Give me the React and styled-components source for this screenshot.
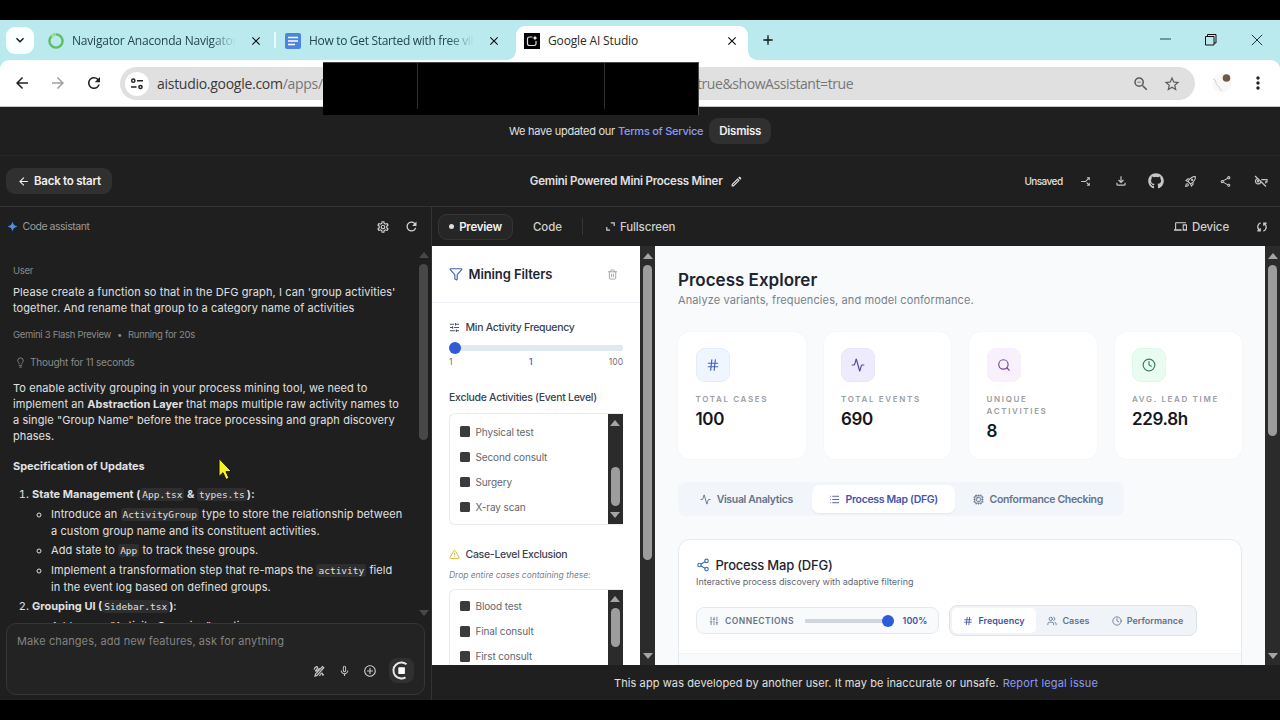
import React from 'react';
import styled, { createGlobalStyle } from 'styled-components';
import {
  Activity,
  Clock,
  Cpu,
  Filter,
  Hash,
  Lightbulb,
  List,
  Search,
  Share2,
  SlidersHorizontal,
  SlidersVertical,
  Trash2,
  TriangleAlert,
  Users,
} from 'lucide-react';
import {
  MdAddCircleOutline,
  MdArrowBack,
  MdArrowForward,
  MdCallSplit,
  MdClose,
  MdAdd,
  MdKeyboardArrowDown,
  MdMoreVert,
  MdOutlineDevices,
  MdOutlineEdit,
  MdOutlineFileDownload,
  MdOutlineKeyboardVoice,
  MdOutlineRocketLaunch,
  MdOutlineSettings,
  MdOutlineShare,
  MdRefresh,
  MdStarBorder,
  MdSync,
  MdZoomOut,
} from 'react-icons/md';
import { FaGithub } from 'react-icons/fa';

const theme = {
  page: '#1f1f1f',
  line: '#2e2e2e',
  text: '#e0e0e0',
  muted: '#8a8a8a',
  link: '#8b9bf5',
  strip: '#baeaee',
  slate: '#64748b',
  blue: '#2f5bd8',
};

const GlobalStyle = createGlobalStyle`
  * { box-sizing: border-box; }
  body {
    margin: 0;
    background: #000;
    font-family: Inter, sans-serif;
    overflow: hidden;
  }
  svg { display: block; flex: none; }
`;

const Screen = styled.div`
  position: relative;
  width: 1280px;
  height: 720px;
  padding: 20px 0;
  display: flex;
  flex-direction: column;
  background: #000;
  overflow: hidden;
  white-space: nowrap;
`;

/* ---------- browser ---------- */

const TabStrip = styled.div`
  height: 40px;
  flex: none;
  display: flex;
  align-items: center;
  background: ${theme.strip};
  padding-left: 6px;
  color: #1d3f46;
`;

const TabSearch = styled.div`
  width: 28px;
  height: 27px;
  border-radius: 9px;
  background: #fbffff;
  display: grid;
  place-items: center;
  color: #111;
`;

const Tab = styled.div`
  width: ${(p) => p.$width}px;
  height: ${(p) => (p.$active ? 34 : 28)}px;
  margin-left: ${(p) => p.$gap || 0}px;
  align-self: ${(p) => (p.$active ? 'flex-end' : 'center')};
  padding: 1px ${(p) => p.$right || 0}px ${(p) => (p.$active ? 6 : 0)}px 8px;
  display: flex;
  align-items: center;
  gap: 8px;
  border-radius: 9px 9px 0 0;
  background: ${(p) => (p.$active ? '#fff' : 'transparent')};
  color: ${(p) => (p.$active ? '#2b2b2b' : '#24474e')};
  position: relative;
  > svg:last-child {
    color: #111;
  }
  ${(p) =>
    p.$active &&
    `
    &::before, &::after {
      content: '';
      position: absolute;
      bottom: 0;
      width: 9px;
      height: 9px;
    }
    &::before { left: -9px; background: radial-gradient(circle at 0 0, transparent 8.5px, #fff 9px); }
    &::after { right: -9px; background: radial-gradient(circle at 100% 0, transparent 8.5px, #fff 9px); }
  `}
`;

const TabTitle = styled.span`
  flex: 1;
  min-width: 0;
  overflow: hidden;
  font: 12px/18px 'Open Sans', 'Noto Sans', sans-serif;
  letter-spacing: ${(p) => p.$track || 0}px;
  ${(p) => p.$fade && 'mask-image: linear-gradient(90deg, #000 82%, transparent 97%);'}
`;

const TabDivider = styled.i`
  width: 2px;
  height: 16px;
  margin-left: 11px;
  background: #e6fbfc;
`;

const NewTab = styled.div`
  margin-left: 12px;
  color: #111;
`;

const WindowButtons = styled.div`
  margin-left: auto;
  padding-right: 17px;
  display: flex;
  align-items: center;
  gap: 34px;
`;

const AddressRow = styled.div`
  height: 47px;
  flex: none;
  background: ${theme.strip};
`;

const AddressBar = styled.div`
  height: 47px;
  padding: 0 12px 0 13px;
  display: flex;
  align-items: center;
  background: #fff;
  border-radius: 9px 9px 0 0;
  border-bottom: 1px solid #c4c4c4;
  color: #222;
  > svg + svg {
    margin-left: 18px;
  }
`;

const UrlField = styled.div`
  width: 1077px;
  height: 33px;
  margin-left: 17px;
  padding: 1px 14px 0 5px;
  display: flex;
  align-items: center;
  border-radius: 17px;
  background: #e0e0e0;
  font: 14px/20px 'Open Sans', 'Noto Sans', sans-serif;
  color: #777;
  > svg {
    color: #5c5c5c;
  }
  > svg:last-child {
    margin-left: auto;
  }
  b {
    font-weight: 400;
    color: #3a3a3a;
  }
`;

const SiteInfo = styled.div`
  width: 24px;
  height: 24px;
  margin-right: 8px;
  border-radius: 50%;
  background: #fff;
  display: grid;
  place-items: center;
`;

const UrlStart = styled.span`
  width: 167px;
  overflow: hidden;
  letter-spacing: -0.28px;
`;

const UrlEnd = styled.span`
  width: 435px;
  margin-left: 373px;
  letter-spacing: -0.42px;
`;

const Avatar = styled.div`
  width: 20px;
  height: 20px;
  margin: 0 16px 0 17px;
`;

const Redaction = styled.div`
  position: absolute;
  left: 323px;
  top: 62px;
  width: 376px;
  height: 53px;
  display: flex;
  background: #000;
  border: 1px solid #4a4a4a;
  border-width: 1px 1px 0 0;
`;

const RedactionCell = styled.i`
  width: ${(p) => p.$width}px;
  height: 46px;
  border-right: 1px solid #303030;
`;

/* ---------- studio shell ---------- */

const Banner = styled.div`
  height: 49px;
  flex: none;
  display: flex;
  align-items: center;
  gap: 3px;
  padding-left: 509px;
  background: ${theme.page};
  border-bottom: 1px solid #262626;
  color: ${theme.text};
  font-size: 11px;
  letter-spacing: -0.26px;
`;

const BannerLink = styled.span`
  margin-right: 3px;
  color: ${theme.link};
  font-weight: 500;
`;

const Pill = styled.div`
  height: 26px;
  padding: 0 ${(p) => p.$pad || 10}px;
  display: flex;
  align-items: center;
  gap: 4px;
  border-radius: 9px;
  background: #303030;
  color: #f0f0f0;
  font-weight: 600;
  font-size: 11.5px;
  letter-spacing: -0.25px;
`;

const Header = styled.div`
  height: 51px;
  flex: none;
  display: flex;
  align-items: center;
  padding: 0 2px 0 6px;
  background: ${theme.page};
  border-bottom: 1px solid #333;
  color: ${theme.text};
`;

const Title = styled.div`
  display: flex;
  align-items: center;
  gap: 7px;
  margin-left: 418px;
  font-weight: 600;
  font-size: 11.5px;
  letter-spacing: -0.21px;
`;

const HeaderActions = styled.div`
  margin-left: auto;
  display: grid;
  grid-template-columns: 49px repeat(6, 35px);
  align-items: center;
  justify-items: center;
  font-size: 10px;
  font-weight: 500;
  color: #c6c6c6;
  height: 26px;
  span {
    color: ${theme.text};
    letter-spacing: -0.55px;
  }
`;

const ForkIcon = styled(MdCallSplit)`
  transform: rotate(90deg);
`;

const Workspace = styled.div`
  flex: 1;
  min-height: 0;
  display: flex;
  background: ${theme.page};
`;

const Assistant = styled.div`
  width: 432px;
  flex: none;
  display: flex;
  flex-direction: column;
  border-right: 1px solid #333;
  padding-bottom: 5px;
`;

const AssistantHead = styled.div`
  height: 39px;
  flex: none;
  padding: 0 12px 0 7px;
  display: flex;
  align-items: center;
  color: #9a9a9a;
  font-size: 10.5px;
  letter-spacing: -0.48px;
  gap: 4.5px;
  > svg {
    color: #d0d0d0;
  }
  > svg:nth-of-type(2) {
    margin-left: auto;
    margin-right: 10px;
  }
`;

const Chat = styled.div`
  flex: 1;
  min-height: 0;
  display: flex;
  overflow: hidden;
`;

const ChatBody = styled.div`
  width: 418px;
  padding: 17px 0 0 13px;
  color: ${theme.text};
  font-size: 11px;
  line-height: 16px;
  letter-spacing: 0.09px;
  overflow: hidden;
  b {
    letter-spacing: 0;
  }
`;

const Note = styled.div`
  display: flex;
  align-items: center;
  height: 16px;
  gap: ${(p) => p.$gap || 4}px;
  margin: ${(p) => p.$top || 0}px 0 0 ${(p) => p.$indent || 0}px;
  color: ${theme.muted};
  font-size: ${(p) => p.$size || 9.5}px;
  letter-spacing: ${(p) => p.$track || -0.3}px;
`;

const Paragraph = styled.p`
  margin: ${(p) => p.$top}px 0 0;
`;

const Subheading = styled(Paragraph)`
  font-weight: 700;
  letter-spacing: -0.03px;
`;

const Spec = styled.ol`
  margin: 12px 0 0;
  padding: 0 0 0 19px;
  line-height: 17px;
  ul {
    margin: 3px 0 2px;
    padding: 0 0 0 19px;
    list-style: circle;
  }
  ul li + li {
    margin-top: 2px;
  }
  ul li:nth-child(3) {
    margin-top: 3px;
  }
`;

const Code = styled.code`
  padding: 1px 2px;
  border-radius: 3px;
  background: #2e2e2e;
  font: 500 9.5px/14px 'DejaVu Sans Mono', monospace;
  letter-spacing: 0;
`;

const Composer = styled.div`
  height: 72px;
  flex: none;
  margin: 0 6px;
  padding: 9px 10px 8px;
  border: 1px solid #363636;
  border-radius: 10px;
  background: #232323;
  color: #828282;
  font-size: 11px;
  line-height: 16px;
  letter-spacing: 0.1px;
`;

const ComposerTools = styled.div`
  display: flex;
  align-items: center;
  justify-content: flex-end;
  gap: 12.5px;
  margin-top: 9px;
  color: #c6c6c6;
`;

const StopButton = styled.div`
  width: 25px;
  height: 25px;
  margin-left: -0.5px;
  border-radius: 8px;
  background: #303030;
  display: grid;
  place-items: center;
`;

const Stage = styled.div`
  flex: 1;
  min-width: 0;
  display: flex;
  flex-direction: column;
`;

const StageBar = styled.div`
  height: 39px;
  flex: none;
  padding: 0 12px 0 6px;
  display: flex;
  align-items: center;
  color: #cfcfcf;
  font-size: 11.5px;
  font-weight: 500;
  letter-spacing: -0.12px;
  > svg:last-child {
    margin-left: auto;
  }
`;

const StageTab = styled.div`
  height: 26px;
  width: ${(p) => p.$width}px;
  margin-left: ${(p) => p.$left || 0}px;
  display: flex;
  align-items: center;
  justify-content: ${(p) => (p.$active ? 'center' : 'flex-start')};
  gap: 5px;
  border-radius: 9px;
  ${(p) =>
    p.$active &&
    `background: #262626; border: 1px solid #363636; color: #f2f2f2; font-weight: 600; letter-spacing: -0.25px;`}
`;

const Dot = styled.i`
  width: 5px;
  height: 5px;
  border-radius: 50%;
  background: #ddd;
`;

const BarDivider = styled.i`
  width: 1px;
  height: 17px;
  margin-left: 14px;
  background: #363636;
`;

const Footer = styled.div`
  height: 35px;
  flex: none;
  padding-top: 1px;
  display: flex;
  align-items: center;
  justify-content: center;
  gap: 4px;
  color: ${theme.text};
  font-size: 11px;
  letter-spacing: 0.1px;
  span {
    color: ${theme.link};
    letter-spacing: 0.15px;
  }
`;

/* ---------- scrollbars ---------- */

const Track = styled.div`
  width: ${(p) => p.$width || 15}px;
  flex: none;
  display: flex;
  flex-direction: column;
  align-items: center;
  padding: ${(p) => p.$pad || '7px 0 6px'};
  background: ${(p) => p.$bg || '#2b2b2b'};
`;

const Arrow = styled.i`
  width: 0;
  height: 0;
  flex: none;
  border: 5px solid transparent;
  border-${(p) => (p.$down ? 'top' : 'bottom')}: 6px solid ${(p) => p.$color || '#a5a5a5'};
  border-${(p) => (p.$down ? 'bottom' : 'top')}: 0;
  ${(p) => p.$down && 'margin-top: auto;'}
`;

const Thumb = styled.i`
  width: 9px;
  height: ${(p) => p.$height}px;
  margin-top: ${(p) => p.$top}px;
  flex: none;
  border-radius: 5px;
  background: ${(p) => p.$color || '#9d9d9d'};
`;

const Scrollbar = ({ width, bg, color, top, height, pad, noEnd }) => (
  <Track $width={width} $bg={bg} $pad={pad}>
    <Arrow $color={color} />
    <Thumb $top={top} $height={height} $color={color} />
    {!noEnd && <Arrow $down $color={color} />}
  </Track>
);

/* ---------- preview app ---------- */

const Preview = styled.div`
  height: 419px;
  flex: none;
  display: flex;
  overflow: hidden;
`;

const Sidebar = styled.div`
  width: 208px;
  flex: none;
  background: #fff;
  overflow: hidden;
  color: #334155;
`;

const SidebarHead = styled.div`
  height: 57px;
  padding: 0 22px 0 17px;
  display: flex;
  align-items: center;
  gap: 5.5px;
  border-bottom: 1px solid #eef1f5;
  color: #1e2533;
  font-size: 13px;
  font-weight: 600;
  letter-spacing: -0.1px;
  svg:last-child {
    margin-left: auto;
    color: #9ca3af;
  }
`;

const SidebarBody = styled.div`
  padding: 16px 17px 0;
`;

const FieldLabel = styled.div`
  height: 16px;
  margin-top: ${(p) => p.$top || 0}px;
  display: flex;
  align-items: center;
  gap: 5.5px;
  font-size: 10.5px;
  font-weight: 500;
  letter-spacing: -0.29px;
  color: #3b4252;
`;

const Slider = styled.div`
  width: ${(p) => p.$width}px;
  height: 12px;
  margin-top: ${(p) => p.$top || 0}px;
  display: flex;
  align-items: center;
  justify-content: ${(p) => (p.$end ? 'flex-end' : 'flex-start')};
  background: linear-gradient(${(p) => p.$rail || '#e2e8f0'}, ${(p) => p.$rail || '#e2e8f0'}) center / 100%
    ${(p) => p.$thick || 6}px no-repeat;
  border-radius: 6px;
`;

const Knob = styled.i`
  width: 12px;
  height: 12px;
  border-radius: 50%;
  background: ${theme.blue};
`;

const Range = styled.div`
  height: 12px;
  margin-top: 2px;
  display: flex;
  justify-content: space-between;
  align-items: center;
  font-size: 8.5px;
  color: #6b7280;
  b {
    font-weight: 500;
    color: #3458a8;
  }
`;

const CheckList = styled.div`
  width: 173.5px;
  height: 112px;
  margin-top: ${(p) => p.$top}px;
  display: flex;
  justify-content: space-between;
  border: 1px solid #e8ebf0;
  border-right: 0;
  border-radius: 6px 0 0 6px;
  overflow: hidden;
`;

const CheckItems = styled.div`
  padding: ${(p) => p.$top}px 0 0 9.5px;
`;

const CheckItem = styled.div`
  height: 25.2px;
  display: flex;
  align-items: center;
  gap: 5.5px;
  font-size: 10px;
  letter-spacing: -0.12px;
  color: #64676e;
  &::before {
    content: '';
    width: 10.5px;
    height: 10.5px;
    border-radius: 1.5px;
    background: #3b3b3b;
  }
`;

const Hint = styled.div`
  margin-top: 7px;
  height: 12px;
  line-height: 12px;
  font-size: 8.5px;
  font-style: italic;
  letter-spacing: -0.03px;
  color: #7c828d;
`;

const Explorer = styled.div`
  width: 610px;
  flex: none;
  padding: 23px 23px 0;
  background: #f8fafc;
  overflow: hidden;
`;

const ExplorerTitle = styled.div`
  height: 22px;
  line-height: 22px;
  font-size: 17px;
  font-weight: 600;
  color: #1e2430;
`;

const ExplorerSub = styled.div`
  height: 18px;
  line-height: 18px;
  font-size: 11px;
  letter-spacing: 0.11px;
  color: #7b8089;
`;

const Stats = styled.div`
  margin-top: 23px;
  display: grid;
  grid-template-columns: repeat(4, 127.5px);
  gap: 18px;
`;

const StatCard = styled.div`
  height: 127px;
  padding: 16px 17.5px;
  border-radius: 12px;
  background: #fff;
  box-shadow: 0 0 2px rgba(15, 23, 42, 0.05);
`;

const StatIcon = styled.div`
  width: 34px;
  height: 34px;
  border-radius: 9px;
  display: grid;
  place-items: center;
  color: ${(p) => p.$color};
  background: ${(p) => p.$bg};
  border: 1px solid ${(p) => p.$edge};
`;

const StatLabel = styled.div`
  margin-top: 11px;
  white-space: pre-line;
  font-size: 8px;
  line-height: 12px;
  font-weight: 600;
  letter-spacing: 1.65px;
  color: #9a9da3;
`;

const StatValue = styled.div`
  margin-top: 3px;
  line-height: 22px;
  font-size: 17px;
  font-weight: 600;
  letter-spacing: -0.35px;
  color: #14171d;
`;

const ViewTabs = styled.div`
  width: 446px;
  height: 34px;
  margin-top: 23px;
  padding: 3px;
  display: flex;
  border-radius: 8px;
  background: #f2f5f9;
`;

const ViewTab = styled.div`
  width: ${(p) => p.$width}px;
  display: flex;
  align-items: center;
  justify-content: center;
  gap: 5.5px;
  border-radius: 7px;
  font-size: 10.5px;
  font-weight: 600;
  letter-spacing: -0.34px;
  color: ${(p) => (p.$active ? '#4456ae' : theme.slate)};
  background: ${(p) => (p.$active ? '#fff' : 'transparent')};
  box-shadow: ${(p) => (p.$active ? '0 1px 2px rgba(15, 23, 42, 0.06)' : 'none')};
`;

const MapCard = styled.div`
  height: 240px;
  margin-top: 23px;
  border: 1px solid #e5e9f0;
  border-radius: 12px;
  background: #fff;
  overflow: hidden;
`;

const MapTitle = styled.div`
  height: 18px;
  margin: 16px 0 0 17px;
  display: flex;
  align-items: center;
  gap: 5.5px;
  font-size: 13px;
  font-weight: 500;
  letter-spacing: -0.22px;
  color: #1e2430;
  svg {
    color: #3f74b8;
  }
`;

const MapSub = styled.div`
  height: 14px;
  margin: 1px 0 0 17px;
  line-height: 14px;
  font-size: 9px;
  letter-spacing: -0.04px;
  color: #5f6876;
`;

const Controls = styled.div`
  height: 31px;
  margin: 16px 0 0 17px;
  display: flex;
  align-items: center;
  gap: 10px;
`;

const Connections = styled.div`
  width: 243px;
  height: 27px;
  padding: 0 0 0 12px;
  display: flex;
  align-items: center;
  border: 1px solid #e4e9f1;
  border-radius: 8px;
  background: #f8fafc;
  font-size: 8.5px;
  font-weight: 600;
  letter-spacing: 0.5px;
  color: ${theme.slate};
  gap: 6px;
  b {
    font-size: 9px;
    font-weight: 600;
    letter-spacing: 0;
    color: #3f55ab;
    margin-left: 2.5px;
  }
`;

const RailWrap = styled.div`
  margin-left: 5px;
`;

const Segments = styled.div`
  width: 248px;
  height: 31px;
  padding: 2px;
  display: flex;
  border: 1px solid #dde3ec;
  border-radius: 8px;
  background: #f0f3f8;
`;

const Segment = styled.div`
  width: ${(p) => p.$width}px;
  display: flex;
  align-items: center;
  justify-content: center;
  gap: 5px;
  border-radius: 5px;
  font-size: 9px;
  font-weight: 600;
  color: ${(p) => (p.$active ? '#3f55a5' : theme.slate)};
  background: ${(p) => (p.$active ? '#fff' : 'transparent')};
`;

const Canvas = styled.div`
  height: 100px;
  margin-top: 17px;
  border-top: 1px solid #eff2f5;
  background: #f8fafc;
`;

const Pointer = styled.svg`
  position: absolute;
  left: 217px;
  top: 457px;
`;

const stats = [
  { label: 'TOTAL CASES', value: '100', icon: Hash, color: '#4361b5', bg: '#eff6ff', edge: '#e2ecfa' },
  { label: 'TOTAL EVENTS', value: '690', icon: Activity, color: '#5548a8', bg: '#eeebfc', edge: '#e9e5fa' },
  { label: 'UNIQUE\nACTIVITIES', value: '8', icon: Search, color: '#77489b', bg: '#f8f0fd', edge: '#f8effc' },
  { label: 'AVG. LEAD TIME', value: '229.8h', icon: Clock, color: '#3a7d66', bg: '#e9fcf2', edge: '#e0f8eb' },
];

const GreenRing = () => (
  <svg width="16" height="16" viewBox="0 0 16 16" fill="none">
    <circle cx="8" cy="8" r="6.6" stroke="#5dbf5f" strokeWidth="2.4" />
    <path d="M3.2 3.5A6.6 6.6 0 0 1 8 1.4" stroke="#9bdc9d" strokeWidth="2.6" />
  </svg>
);

const DocsIcon = () => (
  <svg width="16" height="16" viewBox="0 0 16 16">
    <rect width="16" height="16" rx="2" fill="#4d84dd" />
    <path d="M3 4.5h10M3 8h10M3 11.5h7" stroke="#fff" strokeWidth="1.5" />
  </svg>
);

const StudioIcon = () => (
  <svg width="16" height="16" viewBox="0 0 16 16" fill="none">
    <rect width="16" height="16" fill="#000" />
    <path
      d="M8.5 4H5.2A1.7 1.7 0 0 0 3.5 5.7v5.1a1.7 1.7 0 0 0 1.7 1.7h5.1a1.7 1.7 0 0 0 1.7-1.7V8"
      stroke="#ddd"
      strokeWidth="1.2"
    />
    <path d="M11 2.5l.7 1.8 1.8.7-1.8.7-.7 1.8-.7-1.8L8.5 5l1.8-.7z" fill="#fff" />
  </svg>
);

const TuneIcon = () => (
  <svg width="14" height="14" viewBox="0 0 14 14" fill="none" stroke="#222" strokeWidth="1.5">
    <circle cx="3.3" cy="3.7" r="1.6" />
    <path d="M7 3.7h6M1 10h5.5" />
    <circle cx="10.5" cy="10" r="1.6" />
  </svg>
);

const KeyOffIcon = () => (
  <svg width="14" height="14" viewBox="0 0 14 14" fill="none" stroke="currentColor" strokeWidth="1.2">
    <path d="M1 2l11 10.5" />
    <path d="M3.6 4.6a2.7 2.7 0 1 0 2.9 4L7 8M7.3 5.7H13v2.2h-1.3v1.6" />
    <circle cx="4" cy="7.3" r=".6" fill="currentColor" />
  </svg>
);

const SyncIcon = () => (
  <svg width="12" height="12" viewBox="0 0 12 12" fill="none" stroke="currentColor" strokeWidth="1.3">
    <path d="M4.6 1.8C1.300 3 .7 7.300 3.600 9.600M1.300 9.900h2.900V7.200" />
    <path d="M7.400 10.200c3.300-1.200 3.900-5.500 1-7.800M10.700 2.100H7.800v2.700" />
  </svg>
);

const FullscreenIcon = () => (
  <svg width="9" height="9" viewBox="0 0 9 9" fill="none" stroke="currentColor" strokeWidth="1.2">
    <path d="M4.8.8h3.400v3.200M.8 5v3.200H4" />
  </svg>
);

const DrawIcon = () => (
  <svg width="12" height="12" viewBox="0 0 12 12" fill="none" stroke="currentColor" strokeWidth="1.2">
    <path d="M1 4.5C2.5 1 5 1 4.5 3S1.500 6 3 6.200 6 4 6.500 3" />
    <path d="M2 11l.5-2L9.500 1.500l1.300 1.200L4 10.400z" />
    <path d="M6.500 11c1-2.500 2.500-3.500 2.800-2.700S8.800 11 11 9.500" />
  </svg>
);

const StopRing = () => (
  <svg width="19" height="19" viewBox="0 0 19 19" fill="none">
    <path d="M14.500 3.300A8 8 0 1 0 13.500 16.400" stroke="#e8e8e8" strokeWidth="2" />
    <rect x="6.300" y="6.300" width="6.600" height="6.600" rx=".6" fill="#fff" />
  </svg>
);

const Browser = () => (
  <>
    <TabStrip>
      <TabSearch>
        <MdKeyboardArrowDown size={16} />
      </TabSearch>
      <Tab $width={223} $gap={6}>
        <GreenRing />
        <TabTitle $fade $track={-0.2}>
          Navigator Anaconda Navigator
        </TabTitle>
        <MdClose size={14} />
      </Tab>
      <TabDivider />
      <Tab $width={224} $gap={1}>
        <DocsIcon />
        <TabTitle $fade $track={-0.32}>
          How to Get Started with free vib
        </TabTitle>
        <MdClose size={14} />
      </Tab>
      <Tab $active $width={232} $gap={15} $right={9}>
        <StudioIcon />
        <TabTitle $track={-0.15}>Google AI Studio</TabTitle>
        <MdClose size={14} />
      </Tab>
      <NewTab>
        <MdAdd size={16} />
      </NewTab>
      <WindowButtons>
        <svg width="11" height="12" viewBox="0 0 11 12" stroke="#22474d" fill="none">
          <path d="M0 5h11" />
        </svg>
        <svg width="12" height="12" viewBox="0 0 12 12" stroke="#111" fill="none">
          <path d="M.5 2.5h8.500v8.500H.5zM2.500 2.500V.5H11v8.500H9" />
        </svg>
        <svg width="12" height="12" viewBox="0 0 12 12" stroke="#22373b" fill="none">
          <path d="M.8.8l10.400 10.400M11.200.8L.8 11.200" />
        </svg>
      </WindowButtons>
    </TabStrip>
    <AddressRow>
      <AddressBar>
        <MdArrowBack size={18} />
        <MdArrowForward size={18} color="#a0a0a0" />
        <MdRefresh size={18} />
        <UrlField>
          <SiteInfo>
            <TuneIcon />
          </SiteInfo>
          <UrlStart>
            <b>aistudio.google.com</b>/apps/
          </UrlStart>
          <UrlEnd>true&amp;showAssistant=true</UrlEnd>
          <MdZoomOut size={18} />
          <MdStarBorder size={18} />
        </UrlField>
        <Avatar>
          <svg width="20" height="20" viewBox="0 0 20 20" fill="none">
            <circle cx="10" cy="10" r="9.5" fill="#f8f8f8" />
            <circle cx="14.5" cy="5" r="3.8" fill="#6e5848" />
            <path d="M1 6c4 0 2 6 5 7s0 4 4 4" stroke="#d2d2d2" />
          </svg>
        </Avatar>
        <MdMoreVert size={20} />
      </AddressBar>
    </AddressRow>
  </>
);

const AssistantPanel = () => (
  <Assistant>
    <AssistantHead>
      <svg width="11" height="11" viewBox="0 0 11 11">
        <path
          d="M5.500.5C6.200 3.600 7.400 4.800 10.500 5.500 7.400 6.200 6.200 7.400 5.500 10.500 4.800 7.400 3.600 6.200.5 5.500 3.600 4.800 4.800 3.600 5.500.5z"
          fill="#4a90e2"
        />
      </svg>
      Code assistant
      <MdOutlineSettings size={14} />
      <MdRefresh size={15} />
    </AssistantHead>
    <Chat>
      <ChatBody>
        <Note>User</Note>
        <Paragraph $top={5}>
          Please create a function so that in the DFG graph, I can 'group activities'
          <br />
          together. And rename that group to a category name of activities
        </Paragraph>
        <Note $top={11} $gap={6}>
          <span>Gemini 3 Flash Preview</span>
          <span>•</span>
          <span>Running for 20s</span>
        </Note>
        <Note $top={11} $indent={2} $size={10} $gap={4} $track={-0.22}>
          <Lightbulb size={11} />
          Thought for 11 seconds
        </Note>
        <Paragraph $top={10}>
          To enable activity grouping in your process mining tool, we need to
          <br />
          implement an <b>Abstraction Layer</b> that maps multiple raw activity names to
          <br />
          a single "Group Name" before the trace processing and graph discovery
          <br />
          phases.
        </Paragraph>
        <Subheading $top={14}>Specification of Updates</Subheading>
        <Spec>
          <li>
            <b>
              State Management (<Code>App.tsx</Code> &amp; <Code>types.ts</Code>):
            </b>
            <ul>
              <li>
                Introduce an <Code>ActivityGroup</Code> type to store the relationship between
                <br />a custom group name and its constituent activities.
              </li>
              <li>
                Add state to <Code>App</Code> to track these groups.
              </li>
              <li>
                Implement a transformation step that re-maps the <Code>activity</Code> field
                <br />
                in the event log based on defined groups.
              </li>
            </ul>
          </li>
          <li>
            <b>
              Grouping UI (<Code>Sidebar.tsx</Code>)
            </b>
            :
            <ul>
              <li>Add a new "Activity Grouping" section.</li>
            </ul>
          </li>
        </Spec>
      </ChatBody>
      <Scrollbar width={11} bg="transparent" color="#484848" top={6} height={176} pad="6px 0 7px" />
    </Chat>
    <Composer>
      Make changes, add new features, ask for anything
      <ComposerTools>
        <DrawIcon />
        <MdOutlineKeyboardVoice size={13} />
        <MdAddCircleOutline size={14} />
        <StopButton>
          <StopRing />
        </StopButton>
      </ComposerTools>
    </Composer>
  </Assistant>
);

const FilterSidebar = () => (
  <Sidebar>
    <SidebarHead>
      <Filter size={14} color="#3f66b0" />
      Mining Filters
      <Trash2 size={11} />
    </SidebarHead>
    <SidebarBody>
      <FieldLabel>
        <SlidersHorizontal size={11} />
        Min Activity Frequency
      </FieldLabel>
      <Slider $width={174} $top={7}>
        <Knob />
      </Slider>
      <Range>
        <span>1</span>
        <b>1</b>
        <span>100</span>
      </Range>
      <FieldLabel $top={21}>Exclude Activities (Event Level)</FieldLabel>
      <CheckList $top={8}>
        <CheckItems $top={5}>
          <CheckItem>Physical test</CheckItem>
          <CheckItem>Second consult</CheckItem>
          <CheckItem>Surgery</CheckItem>
          <CheckItem>X-ray scan</CheckItem>
        </CheckItems>
        <Scrollbar top={41} height={39} pad="6px 0" />
      </CheckList>
      <FieldLabel $top={21}>
        <TriangleAlert size={11} color="#c9b440" />
        Case-Level Exclusion
      </FieldLabel>
      <Hint>Drop entire cases containing these:</Hint>
      <CheckList $top={8}>
        <CheckItems $top={3.5}>
          <CheckItem>Blood test</CheckItem>
          <CheckItem>Final consult</CheckItem>
          <CheckItem>First consult</CheckItem>
        </CheckItems>
        <Scrollbar top={6} height={39} pad="6px 0" noEnd />
      </CheckList>
    </SidebarBody>
  </Sidebar>
);

const ProcessExplorer = () => (
  <Explorer>
    <ExplorerTitle>Process Explorer</ExplorerTitle>
    <ExplorerSub>Analyze variants, frequencies, and model conformance.</ExplorerSub>
    <Stats>
      {stats.map(({ label, value, icon: Icon, color, bg, edge }) => (
        <StatCard key={label}>
          <StatIcon $color={color} $bg={bg} $edge={edge}>
            <Icon size={14} />
          </StatIcon>
          <StatLabel>{label}</StatLabel>
          <StatValue>{value}</StatValue>
        </StatCard>
      ))}
    </Stats>
    <ViewTabs>
      <ViewTab $width={131}>
        <Activity size={11} />
        Visual Analytics
      </ViewTab>
      <ViewTab $active $width={143}>
        <List size={11} />
        Process Map (DFG)
      </ViewTab>
      <ViewTab $width={166}>
        <Cpu size={11} />
        Conformance Checking
      </ViewTab>
    </ViewTabs>
    <MapCard>
      <MapTitle>
        <Share2 size={14} />
        Process Map (DFG)
      </MapTitle>
      <MapSub>Interactive process discovery with adaptive filtering</MapSub>
      <Controls>
        <Connections>
          <SlidersVertical size={10} />
          CONNECTIONS
          <RailWrap>
            <Slider $end $width={89} $rail="#d0d5de" $thick={4}>
              <Knob />
            </Slider>
          </RailWrap>
          <b>100%</b>
        </Connections>
        <Segments>
          <Segment $active $width={84}>
            <Hash size={10} />
            Frequency
          </Segment>
          <Segment $width={65}>
            <Users size={10} />
            Cases
          </Segment>
          <Segment $width={93}>
            <Clock size={10} />
            Performance
          </Segment>
        </Segments>
      </Controls>
      <Canvas />
    </MapCard>
  </Explorer>
);

const App = () => {
  return (
    <Screen>
      <GlobalStyle />
      <Browser />
      <Banner>
        <span>We have updated our</span>
        <BannerLink>Terms of Service</BannerLink>
        <Pill>Dismiss</Pill>
      </Banner>
      <Header>
        <Pill $pad={11}>
          <MdArrowBack size={13} />
          Back to start
        </Pill>
        <Title>
          Gemini Powered Mini Process Miner
          <MdOutlineEdit size={13} />
        </Title>
        <HeaderActions>
          <span>Unsaved</span>
          <ForkIcon size={13} />
          <MdOutlineFileDownload size={14} />
          <FaGithub size={16} />
          <MdOutlineRocketLaunch size={13} />
          <MdOutlineShare size={13} />
          <KeyOffIcon />
        </HeaderActions>
      </Header>
      <Workspace>
        <AssistantPanel />
        <Stage>
          <StageBar>
            <StageTab $active $width={75}>
              <Dot />
              Preview
            </StageTab>
            <StageTab $width={35} $left={20}>
              Code
            </StageTab>
            <BarDivider />
            <StageTab $width={80} $left={23}>
              <FullscreenIcon />
              Fullscreen
            </StageTab>
            <StageTab $width={60} $left={488}>
              <MdOutlineDevices size={13} />
              Device
            </StageTab>
            <SyncIcon />
          </StageBar>
          <Preview>
            <FilterSidebar />
            <Scrollbar top={6} height={295} />
            <ProcessExplorer />
            <Scrollbar top={6} height={171} />
          </Preview>
          <Footer>
            This app was developed by another user. It may be inaccurate or unsafe. <span>Report legal issue</span>
          </Footer>
        </Stage>
      </Workspace>
      <Pointer width="18" height="26" viewBox="0 0 18 26">
        <path d="M2 1.500v18l4-3.800 3 6.800 3-1.400-3-6.500h5.500z" fill="#f6f51a" stroke="#111" strokeWidth="1" />
      </Pointer>
      <Redaction>
        <RedactionCell $width={95} />
        <RedactionCell $width={187} />
      </Redaction>
    </Screen>
  );
};
export default App;
